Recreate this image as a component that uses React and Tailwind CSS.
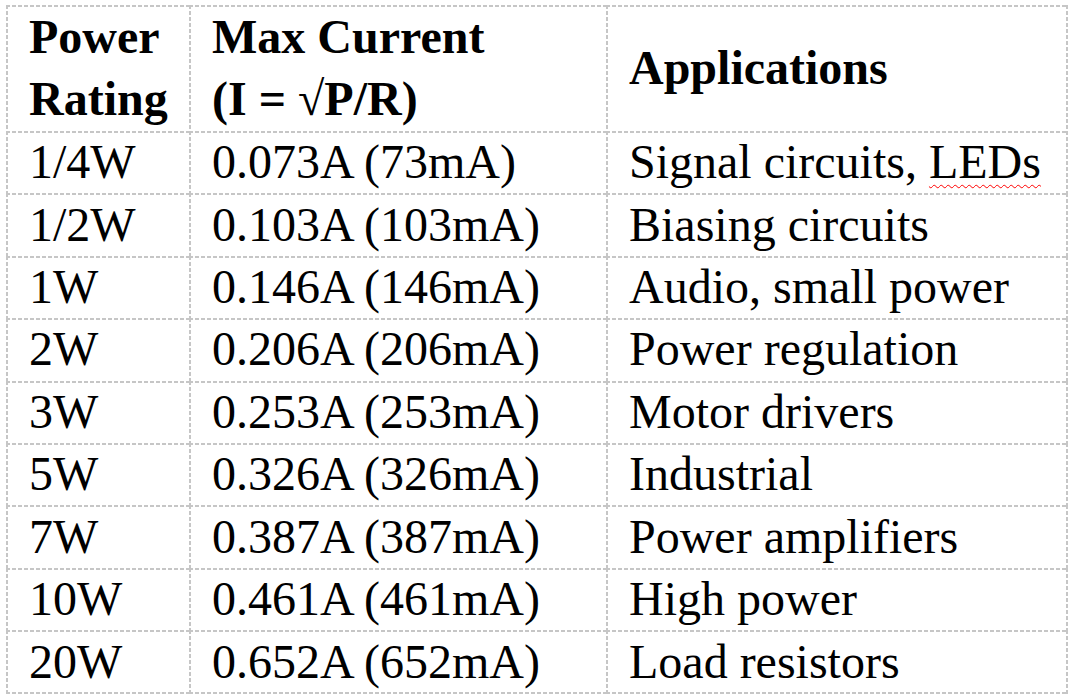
import React from "react";

const rows = [
  ["1/4W", "0.073A (73mA)", "Signal circuits, LEDs"],
  ["1/2W", "0.103A (103mA)", "Biasing circuits"],
  ["1W", "0.146A (146mA)", "Audio, small power"],
  ["2W", "0.206A (206mA)", "Power regulation"],
  ["3W", "0.253A (253mA)", "Motor drivers"],
  ["5W", "0.326A (326mA)", "Industrial"],
  ["7W", "0.387A (387mA)", "Power amplifiers"],
  ["10W", "0.461A (461mA)", "High power"],
  ["20W", "0.652A (652mA)", "Load resistors"],
];

const base = "p-0 pl-[23px] pr-2 align-middle whitespace-nowrap";

// top + left dashed lines
const TL =
  "[background:repeating-linear-gradient(90deg,#c6c6c6_0_4px,transparent_4px_6px)_left_top/100%_2px_no-repeat,repeating-linear-gradient(180deg,#c6c6c6_0_4px,transparent_4px_6px)_left_top/2px_100%_no-repeat]";
// top + left + right
const TLR =
  "[background:repeating-linear-gradient(90deg,#c6c6c6_0_4px,transparent_4px_6px)_left_top/100%_2px_no-repeat,repeating-linear-gradient(180deg,#c6c6c6_0_4px,transparent_4px_6px)_left_top/2px_100%_no-repeat,repeating-linear-gradient(180deg,#c6c6c6_0_4px,transparent_4px_6px)_right_top/2px_100%_no-repeat]";
// top + left + bottom
const TLB =
  "[background:repeating-linear-gradient(90deg,#c6c6c6_0_4px,transparent_4px_6px)_left_top/100%_2px_no-repeat,repeating-linear-gradient(180deg,#c6c6c6_0_4px,transparent_4px_6px)_left_top/2px_100%_no-repeat,repeating-linear-gradient(90deg,#c6c6c6_0_4px,transparent_4px_6px)_left_bottom/100%_2px_no-repeat]";
// all four
const ALL =
  "[background:repeating-linear-gradient(90deg,#c6c6c6_0_4px,transparent_4px_6px)_left_top/100%_2px_no-repeat,repeating-linear-gradient(180deg,#c6c6c6_0_4px,transparent_4px_6px)_left_top/2px_100%_no-repeat,repeating-linear-gradient(180deg,#c6c6c6_0_4px,transparent_4px_6px)_right_top/2px_100%_no-repeat,repeating-linear-gradient(90deg,#c6c6c6_0_4px,transparent_4px_6px)_left_bottom/100%_2px_no-repeat]";

function lineClass(col, last) {
  if (col === 2 && last) return ALL;
  if (col === 2) return TLR;
  if (last) return TLB;
  return TL;
}

export default function App() {
  return (
    <div className="bg-white w-[1074px] h-[698px] pt-[5px] pl-[6px] text-black font-['Liberation_Serif','Times_New_Roman',serif]">
      <table className="border-collapse table-fixed w-[1062px] text-[48px] leading-[62px]">
        <colgroup>
          <col className="w-[183px]" />
          <col className="w-[417px]" />
          <col className="w-[462px]" />
        </colgroup>
        <thead>
          <tr className="h-[126px]">
            <th className={base + " text-left font-bold " + TL}>
              Power
              <br />
              Rating
            </th>
            <th className={base + " text-left font-bold " + TL}>
              Max Current
              <br />
              (I = √P/R)
            </th>
            <th className={base + " text-left font-bold " + TLR}>Applications</th>
          </tr>
        </thead>
        <tbody>
          {rows.map((r, i) => {
            const last = i === rows.length - 1;
            return (
              <tr key={i} className={last ? "h-[64px]" : "h-[62.4px]"}>
                <td className={base + " " + lineClass(0, last)}>{r[0]}</td>
                <td className={base + " " + lineClass(1, last)}>{r[1]}</td>
                <td className={base + " " + lineClass(2, last)}>
                  {i === 0 ? (
                    <>
                      Signal circuits,{" "}
                      <span className="underline decoration-wavy decoration-[#ff0000] decoration-1 underline-offset-[6px]">
                        LEDs
                      </span>
                    </>
                  ) : (
                    r[2]
                  )}
                </td>
              </tr>
            );
          })}
        </tbody>
      </table>
    </div>
  );
}
